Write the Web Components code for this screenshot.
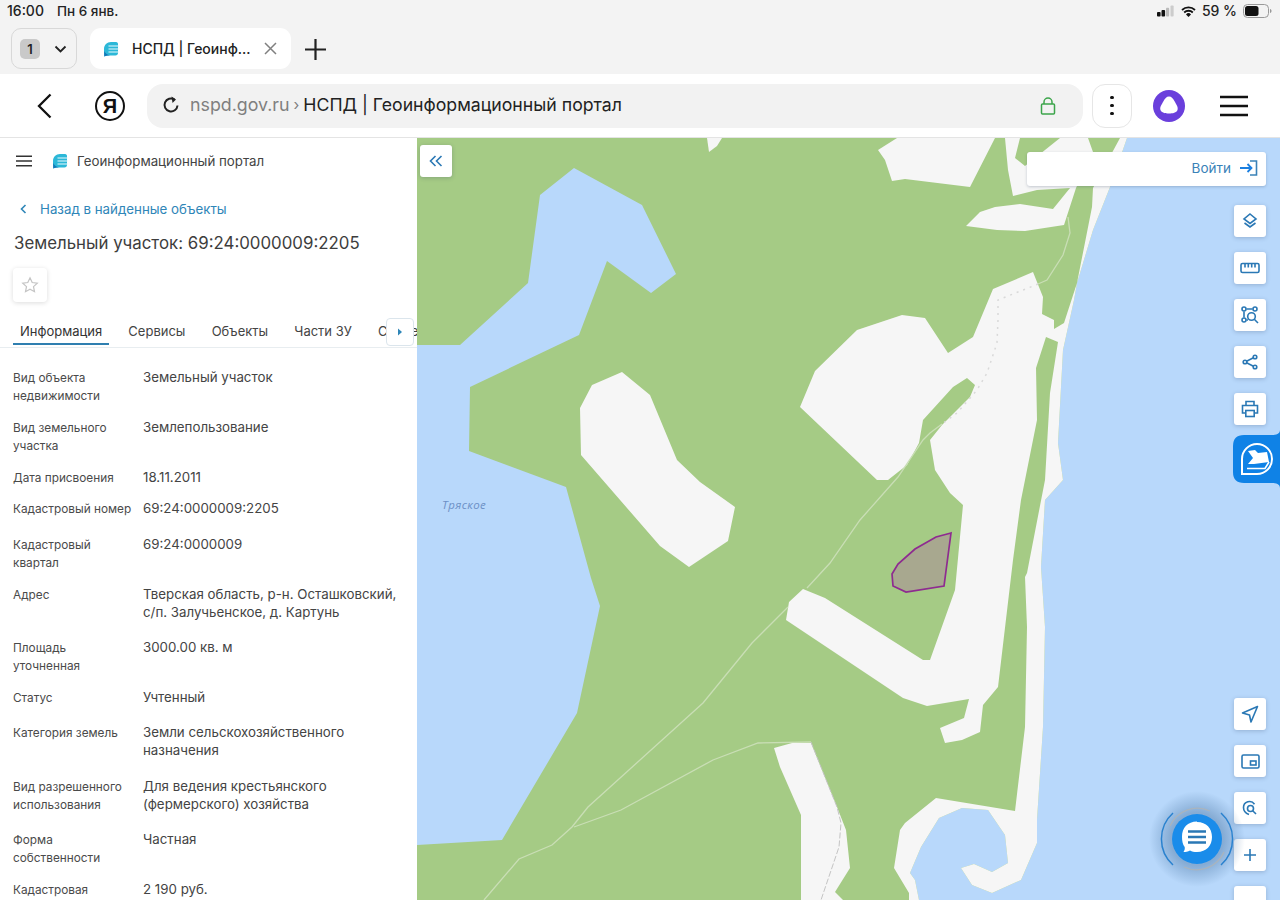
<!DOCTYPE html>
<html lang="ru"><head><meta charset="utf-8"><title>НСПД</title>
<style>
html,body{margin:0;padding:0;background:#fff;width:1280px;height:900px;overflow:hidden;font-family:Inter,"Noto Sans",sans-serif}
app-frame{width:1280px;height:900px}
</style></head><body>
<app-frame>
  <ios-status slot="top"></ios-status>
  <browser-tabs slot="top"></browser-tabs>
  <browser-nav slot="top"></browser-nav>
  <portal-sidebar slot="left">
    <info-row label="Вид объекта недвижимости" gap="14">Земельный участок</info-row>
    <info-row label="Вид земельного участка" gap="14">Землепользование</info-row>
    <info-row label="Дата присвоения" gap="13">18.11.2011</info-row>
    <info-row label="Кадастровый номер" gap="18">69:24:0000009:2205</info-row>
    <info-row label="Кадастровый квартал" gap="14">69:24:0000009</info-row>
    <info-row label="Адрес" gap="17">Тверская область, р-н. Осташковский, с/п. Залучьенское, д. Картунь</info-row>
    <info-row label="Площадь уточненная" gap="14">3000.00 кв. м</info-row>
    <info-row label="Статус" gap="17">Учтенный</info-row>
    <info-row label="Категория земель" gap="18">Земли сельскохозяйственного назначения</info-row>
    <info-row label="Вид разрешенного использования" gap="17">Для ведения крестьянского (фермерского) хозяйства</info-row>
    <info-row label="Форма собственности" gap="14">Частная</info-row>
    <info-row label="Кадастровая стоимость" gap="14">2 190 руб.</info-row>
  </portal-sidebar>
  <map-view slot="main"></map-view>
</app-frame>
<script>
const LOGO=`<svg viewBox="0 0 16 16" width="100%" height="100%" style="display:block"><path d="M8 1H13C14.500 1 15 2 15 3V12C15 13.500 14 14.500 12.500 14.500H6C4 14.500 2 15 1.500 15.500 1 14 1 11 1 8 1 4 4 1 8 1z" fill="#2cb8d8"/><path d="M1.200 10V15.500C2.500 14.800 4.500 14.500 7 14.500 4 13.500 2.200 12.200 1.200 10z" fill="#1479b8"/><path d="M5.500 5h10.500M5.500 8h10.500M5.500 11h10.500" stroke="#eafafd" stroke-width="1.200" fill="none"/></svg>`;
function def(name,css,html,extra){
  customElements.define(name,class extends HTMLElement{
    constructor(){super();const r=this.attachShadow({mode:'open'});r.innerHTML=`<style>${css}</style>`+(typeof html==='function'?html(this):html);}
    connectedCallback(){ if(extra) extra(this); }
  });
}
def('app-frame',`:host{display:flex;flex-direction:column;overflow:hidden;color:#222}
.main{display:flex;flex:1;min-height:0}`,`<slot name="top"></slot><div class="main"><slot name="left"></slot><slot name="main"></slot></div>`);

def('ios-status',`:host{display:flex;align-items:center;justify-content:space-between;height:22px;background:#f3f3f3;padding:0 7px 0 7px;font:500 14px/22px Inter,sans-serif;color:#222}
.l{display:flex;gap:13px}.r{display:flex;align-items:center;gap:6px}
.d{font-size:13.500px}`,`<div class="l"><span>16:00</span><span class="d">Пн 6 янв.</span></div>
<div class="r"><svg width="18" height="12" viewBox="0 0 20 12"><rect x="0" y="7" width="4" height="5" rx="1" fill="#111"/><rect x="5" y="5" width="4" height="7" rx="1" fill="#111"/><rect x="10" y="2.500" width="3.500" height="9.500" rx="1" fill="#bbb"/><rect x="15" y="0" width="3.500" height="12" rx="1" fill="#ccc"/></svg>
<svg width="15" height="11" viewBox="0 0 15 11"><path d="M1 4a9.500 9.500 0 0 1 13 0M3.200 6.500a6.200 6.200 0 0 1 8.600 0" fill="none" stroke="#111" stroke-width="1.800"/><path d="M7.500 11 5 8.400a3.500 3.500 0 0 1 5 0z" fill="#111"/></svg>
<span>59 %</span>
<svg width="30" height="14" viewBox="0 0 30 14"><rect x=".5" y=".5" width="25" height="13" rx="4" fill="none" stroke="#999"/><rect x="2" y="2" width="13.500" height="10" rx="2.500" fill="#111"/><path d="M27 5v4c1-.3 1.500-1 1.500-2S28 5.300 27 5z" fill="#999"/></svg></div>`);

def('browser-tabs',`:host{display:flex;align-items:flex-start;height:52px;background:#f3f3f3;padding:6px 0 0 11px;box-sizing:border-box;font-family:Inter,sans-serif}
.sw{width:66px;height:41px;border:1px solid #d8d8d8;border-radius:10px;display:flex;align-items:center;gap:14px;padding-left:8px;box-sizing:border-box}
.n{width:20px;height:20px;background:#c9c9c9;border-radius:5px;font:600 13px/20px Inter,sans-serif;text-align:center;color:#222}
.tab{margin-left:13px;width:201px;height:41px;background:#fff;border-radius:11px;display:flex;align-items:center;padding-left:13px;box-sizing:border-box;font:500 14px/41px Inter,sans-serif;color:#222}
.ic{width:16px;height:16px;margin-right:13px;flex:none}
.t{width:118px;white-space:nowrap;flex:none}
.x{margin-left:14px;flex:none}
.plus{margin:10px 0 0 13px}`,`<div class="sw"><div class="n">1</div><svg width="13" height="8" viewBox="0 0 13 8"><path d="M1.500 1.500 6.500 6.500 11.500 1.500" fill="none" stroke="#222" stroke-width="1.800"/></svg></div>
<div class="tab"><div class="ic">${LOGO}</div><div class="t">НСПД | Геоинф...</div><svg class="x" width="13" height="13" viewBox="0 0 13 13"><path d="M1 1 12 12M12 1 1 12" stroke="#808080" stroke-width="1.500"/></svg></div>
<svg class="plus" width="23" height="23" viewBox="0 0 23 23"><path d="M11.500 1v21M1 11.500h21" stroke="#222" stroke-width="2.200"/></svg>`);

def('browser-nav',`:host{display:flex;align-items:center;height:64px;background:#fff;border-bottom:1px solid #e4e4e4;box-sizing:border-box;padding:0 0 0 37px;font-family:Inter,sans-serif}
.ya{width:26px;height:26px;border:2.500px solid #111;border-radius:50%;margin-left:43px;font:700 20px/26px "Liberation Sans",sans-serif;text-align:center;color:#111}
.addr{margin-left:22px;width:936px;height:44px;background:#f2f2f2;border-radius:16px;display:flex;align-items:center;padding:0 0 2px 15px;box-sizing:border-box;font-size:18px;position:relative}
.u{color:#7f7f7f;margin-left:10px;font-size:17.800px}.sep{color:#7f7f7f;margin:0 4px;font-size:15px}.ti{color:#222;font-size:17.700px}
.lock{position:absolute;left:893px;top:12px}
.more{margin-left:9px;width:38px;height:42px;border:1.500px solid #e6e6e6;border-radius:13px;display:flex;flex-direction:column;align-items:center;justify-content:center;gap:4.500px}
.more i{width:3.500px;height:3.500px;border-radius:50%;background:#111;display:block}
.al{margin-left:21px}.ham{margin-left:35px}`,`<svg width="15" height="26" viewBox="0 0 15 26"><path d="M13.500 1.500 2 13l11.500 11.500" fill="none" stroke="#111" stroke-width="2.300"/></svg>
<div class="ya">Я</div>
<div class="addr"><svg width="18" height="18" viewBox="0 0 18 18"><path d="M15.500 9.500a6.500 6.500 0 1 1-3-6" fill="none" stroke="#222" stroke-width="2"/><path d="M9.500 0.500l4.500 3-3.500 3.500z" fill="#222"/></svg><span class="u">nspd.gov.ru</span><span class="sep">›</span><span class="ti">НСПД | Геоинформационный портал</span>
<svg class="lock" width="16" height="20" viewBox="0 0 16 20"><rect x="1.500" y="8" width="13" height="10" rx="1" fill="none" stroke="#3ca54b" stroke-width="1.500"/><path d="M4 8V6a4 4 0 0 1 8 0v2" fill="none" stroke="#3ca54b" stroke-width="1.500"/></svg></div>
<div class="more"><i></i><i></i><i></i></div>
<svg class="al" width="32" height="32" viewBox="0 0 32 32"><circle cx="16" cy="16" r="16" fill="#6a3fdc"/><path d="M16 6.500c2.500 0 4.200 2 5.700 5 1.500 3 3.800 5.500 2.800 8.500-1 2.800-4.800 3.500-8.500 3.500s-7.500-.7-8.500-3.500c-1-3 1.300-5.500 2.800-8.500 1.500-3 3.200-5 5.700-5z" fill="#fff"/></svg>
<svg class="ham" width="28" height="22" viewBox="0 0 28 22"><path d="M0 2h28M0 11h28M0 20h28" stroke="#111" stroke-width="2.400"/></svg>`);

def('portal-sidebar',`:host{display:block;width:417px;height:762px;overflow:hidden;background:#fff;flex:none;color:#3d3d3d;font-family:Inter,sans-serif}
.hd{display:flex;align-items:center;height:46px;padding:0 0 0 16px}
.logo{width:16px;height:16px;margin:0 9px 0 20px}
.pt{font-size:13.300px;color:#444}
.back{display:flex;align-items:center;margin:15px 0 0 20px;height:20px;font-size:13.300px;color:#2f86b8}
.back svg{margin-right:13px}
h1{margin:12px 0 0 14px;font:400 16.850px/24px Inter,sans-serif;color:#3d3d3d;white-space:nowrap}
.star{margin:13px 0 0 13px;width:34px;height:34px;border-radius:4px;box-shadow:0 1px 5px rgba(0,0,0,.14);display:flex;align-items:center;justify-content:center}
.tabs{position:relative;display:flex;gap:26.200px;margin:16px 0 0 0;padding:1px 0 0 20px;height:28px;border-bottom:1px solid #e8edf0;font-size:13px;line-height:24px;white-space:nowrap;overflow:hidden;color:#444}
.tabs .on{color:#333;position:relative}
.tabs .on:after{content:"";position:absolute;left:-7px;right:-7px;top:24px;height:2px;background:#2f7fb0}
.more{position:absolute;left:386px;top:0;width:26px;height:26px;background:#fff;border:1px solid #dbe5ec;border-radius:4px;display:flex;align-items:center;justify-content:center}
.rows{padding:20px 0 0 0}`,`<div class="hd"><svg width="16" height="12" viewBox="0 0 16 12"><path d="M0 1.200h16M0 6h16M0 10.800h16" stroke="#333" stroke-width="1.600"/></svg><div class="logo">${LOGO}</div><div class="pt">Геоинформационный портал</div></div>
<div class="back"><svg width="7" height="10" viewBox="0 0 7 10"><path d="M5.500 1 1.500 5l4 4" fill="none" stroke="#2f86b8" stroke-width="1.600"/></svg>Назад в найденные объекты</div>
<h1>Земельный участок: 69:24:0000009:2205</h1>
<div class="star"><svg width="18" height="18" viewBox="0 0 18 18"><path d="M9 1.800l2.200 4.700 5.100.6-3.800 3.500 1 5.100L9 13.200 4.500 15.700l1-5.100L1.700 7.100l5.100-.6z" fill="none" stroke="#c4c4c4" stroke-width="1.200"/></svg></div>
<div class="tabs"><span class="on">Информация</span><span>Сервисы</span><span>Объекты</span><span>Части ЗУ</span><span>Сведения</span><div class="more"><svg width="6" height="8" viewBox="0 0 6 8"><path d="M1 .5 5 4 1 7.500z" fill="#2f86b8"/></svg></div></div>
<div class="rows"><slot></slot></div>`);

def('info-row',`:host{display:grid;grid-template-columns:122px 260px;column-gap:8px;padding:0 0 0 13px;font-family:Inter,sans-serif}
.l{font-size:11.800px;line-height:18px;color:#4a4a4a;padding-top:1px;margin-bottom:-1px}.v{font-size:13.300px;line-height:18px;color:#444}`,
t=>`<div class="l">${t.getAttribute('label')}</div><div class="v"><slot></slot></div>`,
t=>{t.style.paddingBottom=(t.getAttribute('gap')||14)+'px';});

def('map-tool',`:host{display:flex;width:32px;height:32px;background:#fff;border-radius:3px;box-shadow:0 1px 4px rgba(40,60,90,.25);align-items:center;justify-content:center;flex:none}`,`<slot></slot>`);

const S='fill="none" stroke="#2a78b5" stroke-width="1.600"';
def('map-view',`:host{display:block;position:relative;flex:1;height:762px;overflow:hidden;background:#a5cb85;font-family:Inter,sans-serif}
svg.m{position:absolute;left:0;top:0;display:block}
.col{position:absolute;left:3px;top:7px}
.login{position:absolute;left:610px;top:14px;width:239px;height:34px;background:#fff;border-radius:3px;box-shadow:0 1px 3px rgba(40,60,90,.25);display:flex;align-items:center;justify-content:flex-end;gap:8px;padding:0 8px 2px 0;box-sizing:border-box;font-size:13.500px;color:#3a82b8}
.tools{position:absolute;left:817px;display:flex;flex-direction:column;gap:15px}
.t1{top:67px}.t2{top:560px}
.flag{position:absolute;left:816px;top:292px}
.chat{position:absolute;left:733px;top:660px}
.lake{position:absolute;left:25px;top:360px;font:italic 11.500px/14px "Open Sans",sans-serif;color:#6c90c6;letter-spacing:.4px}`,
`<svg class="m" width="863" height="762" viewBox="417 138 863 762">
<polygon fill="#b8d8fb" points="417,345 460,345 528,283 540,195 574,168 642,205 676,274 651,293 607,261 579,335 470,387 469,451 566,487 591,578 600,606 577,713 502,840 417,845"/>
<polygon fill="#b8d8fb" points="1127,138 1110,187 1093,230 1077,283 1074,300 1063,350 1058,443 1063,480 1045,500 1041,567 1045,627 1043,727 1037,820 1037,843 1021,880 992,893 972,885 961,868 974,864 992,872 1008,863 1005,835 988,810 962,808 939,818 921,847 910,873 915,880 919,900 1280,900 1280,138"/>
<g fill="#f6f6f6">
<polygon points="622,372 650,395 677,460 700,482 735,507 728,541 689,567 660,546 581,455 580,408 592,385"/>
<polygon points="707,138 722,138 717,146 709,152"/>
<polygon points="878,150 897,138 995,138 970,187 905,179 892,181 885,160"/>
<polygon points="1005,138 1020,138 1015,158 1025,166 1060,138 1088,138 1093,152 1076,188 1064,225 1025,231 997,230 966,226 980,212 995,207 1020,204 1053,209 1070,188 1037,190 1013,196 1008,170"/>
<polygon points="800,407 815,371 857,330 902,315 925,318 948,353 973,337 993,289 1033,272 1043,297 1042,314 1054,320 1054,329 1064,323 1077,283 1092,207 1093,188 1120,138 1127,138 1110,187 1093,230 1077,283 1074,300 1063,350 1058,443 1063,480 1045,500 1041,567 1045,627 1043,727 1037,820 1037,843 1021,880 992,893 972,885 961,868 974,864 992,872 1008,863 1005,835 988,810 962,808 939,818 921,847 910,873 915,880 919,900 909,900 909,893 894,868 900,830 905,823 936,798 1015,811 1025,727 1027,627 1025,577 1027,573 1045,480 1050,393 1058,342 1046,337 1036,368 1037,420 1021,500 1013,560 998,687 983,705 980,732 962,740 945,743 940,728 964,718 969,699 927,706 903,698 786,620 789,602 803,589 825,598 923,660 930,660 955,590 963,505 950,493 935,470 930,440 942,425 970,397 975,385 967,378 953,387 923,420 919,443 907,465 888,480 877,480"/>
<polygon points="774,748 792,743 811,743 837,807 846,830 850,868 835,892 843,900 801,900 801,815 780,767"/>
</g>
<g fill="none" stroke="#c9deb5" stroke-width="1.300">
<polyline points="1068,217 1070,233 1063,255 1047,280 1038,284"/>
<polyline points="942,424 930,433 923,440 898,477 860,520 830,563 807,588"/>
<polyline points="788,607 752,643 703,703 588,807 572,827 552,845 519,859 484,900"/>
<polyline points="574,827 621,810 713,760 758,743 811,742"/>
</g>
<g fill="none" stroke="#d9d9d9" stroke-width="1.500" stroke-dasharray="2 5">
<polyline points="1038,284 998,300 998,320 997,343 987,373 977,390 957,413 942,424"/>
</g>
<polyline points="811,742 837,807 841,823 839,847 821,900" fill="none" stroke="#c4c4c4" stroke-width="1" stroke-dasharray="6 2"/>
<polygon points="951,533 936,537 915,549 898,564 892,574 893,586 906,592 944,586" fill="#a8a88f" stroke="#8e2b90" stroke-width="1.700"/>
</svg>
<div class="lake">Тряское</div>
<map-tool class="col"><svg width="14" height="12" viewBox="0 0 14 12"><path d="M6.500 1 1.500 6l5 5M12.500 1l-5 5 5 5" ${S} stroke-width="1.800"/></svg></map-tool>
<div class="login">Войти<svg width="19" height="16" viewBox="0 0 19 16"><path d="M11 1h6.500v14H11" fill="none" stroke="#3a82b8" stroke-width="1.600"/><path d="M1 8h11M8.500 4l4 4-4 4" fill="none" stroke="#1b7fe0" stroke-width="1.800"/></svg></div>
<div class="tools t1">
<map-tool><svg width="18" height="18" viewBox="0 0 18 18"><path d="M9 2l6 5-6 4.500L3 7z" ${S}/><path d="M3.500 11l5.500 4 5.500-4" ${S}/></svg></map-tool>
<map-tool><svg width="20" height="12" viewBox="0 0 20 12"><rect x="1" y="1.500" width="18" height="9" rx="1.500" ${S} stroke-width="1.800"/><path d="M5 2v3.500M8.300 2v3.500M11.700 2v3.500M15 2v3.500" ${S} stroke-width="1.400"/></svg></map-tool>
<map-tool><svg width="18" height="18" viewBox="0 0 18 18"><circle cx="3" cy="3" r="2" ${S} stroke-width="1.300"/><circle cx="14" cy="3" r="2" ${S} stroke-width="1.300"/><circle cx="3" cy="14" r="2" ${S} stroke-width="1.300"/><path d="M5.500 3h6M3 5.500v6M5.500 14H7" ${S} stroke-width="1.300"/><circle cx="10.500" cy="10.500" r="3.800" ${S} stroke-width="1.300"/><path d="M13.300 13.300 17 17" ${S} stroke-width="1.500"/></svg></map-tool>
<map-tool><svg width="16" height="16" viewBox="0 0 16 16"><circle cx="13" cy="3" r="1.800" ${S} stroke-width="1.400"/><circle cx="3" cy="8" r="1.800" ${S} stroke-width="1.400"/><circle cx="13" cy="13" r="1.800" ${S} stroke-width="1.400"/><path d="M4.600 7.200 11.400 3.800M4.600 8.800l6.800 3.400" ${S} stroke-width="1.400"/></svg></map-tool>
<map-tool><svg width="18" height="18" viewBox="0 0 18 18"><path d="M5 5V1.500h8V5M4.500 13H1.500V5.500h15V13h-3" ${S} stroke-width="1.700"/><rect x="4.800" y="10.500" width="8.400" height="6" ${S} stroke-width="1.700"/></svg></map-tool>
</div>
<svg class="flag" width="47" height="58" viewBox="0 0 47 58"><path d="M47 0C47 4 43 5 39 5H11Q0 5 0 16V42Q0 53 11 53H39C43 53 47 54 47 58Z" fill="#0f82e6"/>
<path d="M9 44V29a15 15 0 1 1 15 15z" fill="none" stroke="#fff" stroke-width="2"/><path d="M15 21l7-1 3 3 9-1 2 10-15 2-6 0 5-6z" fill="#fff"/><path d="M14 38.500h18l4-6.500" fill="none" stroke="#fff" stroke-width="1.600"/></svg>
<div class="tools t2">
<map-tool><svg width="18" height="18" viewBox="0 0 18 18"><path d="M16.500 1.500 1.500 8l7 2 1.500 7z" ${S} stroke-width="1.800" stroke-linejoin="round"/></svg></map-tool>
<map-tool><svg width="19" height="15" viewBox="0 0 19 15"><rect x="1" y="1" width="17" height="13" rx="1.500" ${S} stroke-width="1.700"/><rect x="9.500" y="7" width="5.500" height="4" ${S} stroke-width="1.500"/></svg></map-tool>
<map-tool><svg width="16" height="16" viewBox="0 0 16 16"><path d="M7 14.500C3 13 1.500 10 1.500 7.500a6 6 0 0 1 11-3.300" ${S}/><circle cx="8.500" cy="8.500" r="3" ${S}/><path d="M10.700 10.700 14 14" ${S}/></svg></map-tool>
<map-tool><svg width="14" height="14" viewBox="0 0 14 14"><path d="M7 1v12M1 7h12" ${S} stroke-width="1.800"/></svg></map-tool>
<map-tool><svg width="14" height="14" viewBox="0 0 14 14"><path d="M1 7h12" ${S} stroke-width="1.800"/></svg></map-tool>
</div>
<svg class="chat" width="94" height="82" viewBox="0 0 94 82" style="overflow:visible">
<defs><radialGradient id="gl"><stop offset=".55" stop-color="#3c6a9a" stop-opacity=".4"/><stop offset="1" stop-color="#3c6a9a" stop-opacity="0"/></radialGradient></defs>
<circle cx="47" cy="41" r="48" fill="url(#gl)"/>
<path d="M23 15a35 35 0 0 0 0 52M71 15a35 35 0 0 1 0 52" fill="none" stroke="#2a82cf" stroke-width="1.500"/>
<path d="M20 28a30 30 0 0 1 40-15M74 54a30 30 0 0 1-40 15" fill="none" stroke="#aab4bd" stroke-width="1.300"/>
<circle cx="47" cy="41" r="25" fill="#1a8cea"/>
<path d="M47 24c9.500 0 15 6.500 15 15s-5.500 15-15 15c-3 0-5-.5-7-1.500-2 1-4.500 1.500-6.500 1.500 1-1.500 1.500-3 1.200-5-2-2.500-2.700-6-2.700-10.500 0-8.500 5.500-15 15-15z" fill="#fff"/>
<path d="M38 33.500h18M38 39h18M38 44.500h18" stroke="#2a78b5" stroke-width="2.300"/></svg>`);
</script>
</body></html>
